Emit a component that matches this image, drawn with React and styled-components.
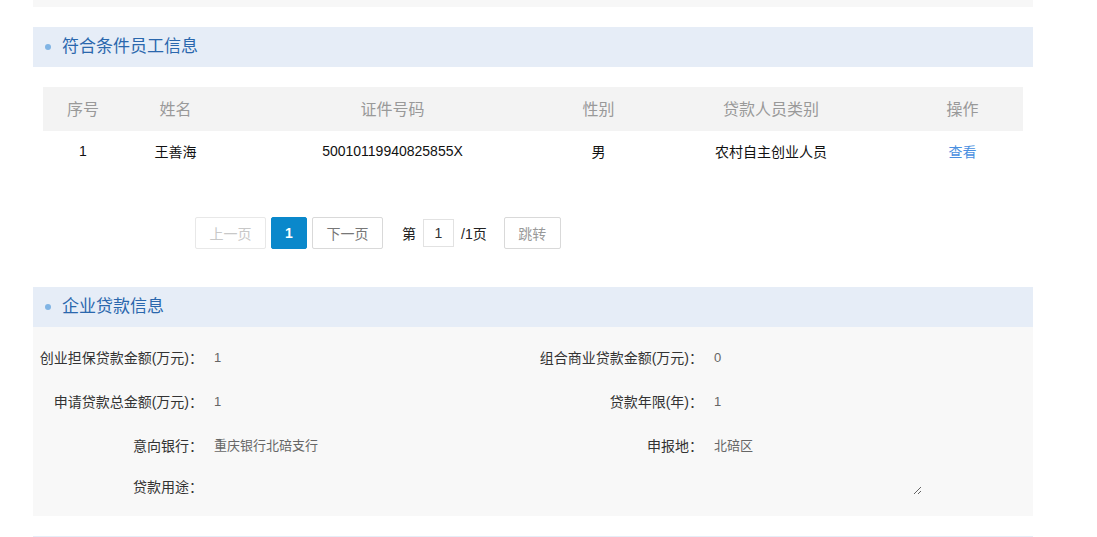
import React from "react";
import styled, { createGlobalStyle } from "styled-components";

const GlobalStyle = createGlobalStyle`
  html, body {
    margin: 0;
    padding: 0;
    background: #ffffff;
    font-family: "Liberation Sans", "Noto Sans CJK SC", sans-serif;
    color: #333;
  }
`;

const Page = styled.div`
  width: 1000px;
  margin-left: 33px;
  display: flex;
  flex-direction: column;
  gap: 20px;
`;

const PrevPanelTail = styled.div`
  height: 7px;
  background: #f7f7f7;
`;

const Section = styled.section`
  display: flex;
  flex-direction: column;
`;

const SectionHeader = styled.div`
  height: 40px;
  background: #e6edf7;
  display: flex;
  align-items: center;
  padding-left: 12px;
  gap: 11px;
`;

const Bullet = styled.span`
  width: 6px;
  height: 6px;
  border-radius: 50%;
  background: #80b4e4;
`;

const SectionTitle = styled.h3`
  margin: 0;
  font-size: 17px;
  font-weight: normal;
  color: #2a67ad;
  line-height: 40px;
`;

const TableWrap = styled.div`
  padding: 20px 10px 0;
`;

const Table = styled.table`
  width: 980px;
  border-collapse: collapse;
  table-layout: fixed;
`;

const HeadCell = styled.th`
  height: 42px;
  background: #f3f3f3;
  color: #999;
  font-size: 16px;
  font-weight: normal;
  text-align: center;
  vertical-align: middle;
  padding: 0 0 2px;
`;

const Cell = styled.td`
  height: 39px;
  font-size: 14px;
  color: ${(p) => (p.$link ? "#4a8fe0" : "#111")};
  text-align: center;
  vertical-align: middle;
  padding: 0 0 3px;
  cursor: ${(p) => (p.$link ? "pointer" : "default")};
`;

const Pager = styled.div`
  display: flex;
  align-items: center;
  padding: 44px 0 38px 162px;
  font-size: 14px;
`;

const PageBtn = styled.button`
  box-sizing: border-box;
  height: 32px;
  width: ${(p) => p.$w || 71}px;
  margin-right: 5px;
  border: 1px solid ${(p) => (p.$active ? "#0a88cb" : p.$disabled ? "#e8e8e8" : "#d9d9d9")};
  border-radius: 2px;
  background: ${(p) => (p.$active ? "#0a88cb" : "#fff")};
  color: ${(p) => (p.$active ? "#fff" : p.$disabled ? "#c8c8c8" : "#777")};
  font-family: inherit;
  font-size: 14px;
  font-weight: ${(p) => (p.$active ? "bold" : "normal")};
  padding: 0;
`;

const PagerText = styled.span`
  color: #222;
  margin-left: ${(p) => p.$ml || 0}px;
`;

const PageInput = styled.input`
  box-sizing: border-box;
  width: 31px;
  height: 28px;
  margin: 0 7px;
  border: 1px solid #e2e2e2;
  text-align: center;
  font-family: inherit;
  font-size: 14px;
  color: #333;
  padding: 0;
  outline: none;
`;

const JumpBtn = styled(PageBtn)`
  width: 57px;
  margin-left: 17px;
  color: #999;
`;

const InfoPanel = styled.div`
  background: #f8f8f8;
  padding: 9px 0 19px;
  display: grid;
  grid-template-columns: 500px 500px;
`;

const Field = styled.div`
  display: flex;
  align-items: ${(p) => (p.$top ? "flex-start" : "center")};
  height: ${(p) => (p.$top ? "auto" : "44px")};
  padding-top: ${(p) => (p.$top ? "9px" : "0")};
  grid-column: ${(p) => (p.$wide ? "1 / span 2" : "auto")};
`;

const Label = styled.span`
  width: 170px;
  flex-shrink: 0;
  text-align: right;
  font-size: 14px;
  color: #333;
  line-height: 20px;
  white-space: nowrap;
`;

const Value = styled.span`
  padding-left: 11px;
  font-size: 13px;
  color: #666;
  line-height: 20px;
`;

const Purpose = styled.textarea`
  margin-left: 11px;
  width: 708px;
  height: 18px;
  border: none;
  background: transparent;
  resize: both;
  font-family: inherit;
  font-size: 13px;
  color: #666;
  padding: 0;
  outline: none;
  overflow: hidden;
`;

const cols = [80, 105, 329, 83, 262, 121];
const heads = ["序号", "姓名", "证件号码", "性别", "贷款人员类别", "操作"];

export default function App() {
  return (
    <>
      <GlobalStyle />
      <Page>
        <PrevPanelTail />
        <Section>
          <SectionHeader>
            <Bullet />
            <SectionTitle>符合条件员工信息</SectionTitle>
          </SectionHeader>
          <TableWrap>
            <Table>
              <colgroup>
                {cols.map((w, i) => (
                  <col key={i} style={{ width: w }} />
                ))}
              </colgroup>
              <thead>
                <tr>
                  {heads.map((h) => (
                    <HeadCell key={h}>{h}</HeadCell>
                  ))}
                </tr>
              </thead>
              <tbody>
                <tr>
                  <Cell>1</Cell>
                  <Cell>王善海</Cell>
                  <Cell>50010119940825855X</Cell>
                  <Cell>男</Cell>
                  <Cell>农村自主创业人员</Cell>
                  <Cell $link>查看</Cell>
                </tr>
              </tbody>
            </Table>
          </TableWrap>
          <Pager>
            <PageBtn $disabled>上一页</PageBtn>
            <PageBtn $active $w={36}>1</PageBtn>
            <PageBtn>下一页</PageBtn>
            <PagerText $ml={14}>第</PagerText>
            <PageInput defaultValue="1" />
            <PagerText>/1页</PagerText>
            <JumpBtn>跳转</JumpBtn>
          </Pager>
          <SectionHeader>
            <Bullet />
            <SectionTitle>企业贷款信息</SectionTitle>
          </SectionHeader>
          <InfoPanel>
            <Field>
              <Label>创业担保贷款金额(万元)：</Label>
              <Value>1</Value>
            </Field>
            <Field>
              <Label>组合商业贷款金额(万元)：</Label>
              <Value>0</Value>
            </Field>
            <Field>
              <Label>申请贷款总金额(万元)：</Label>
              <Value>1</Value>
            </Field>
            <Field>
              <Label>贷款年限(年)：</Label>
              <Value>1</Value>
            </Field>
            <Field>
              <Label>意向银行：</Label>
              <Value>重庆银行北碚支行</Value>
            </Field>
            <Field>
              <Label>申报地：</Label>
              <Value>北碚区</Value>
            </Field>
            <Field $wide $top>
              <Label>贷款用途：</Label>
              <Purpose readOnly />
            </Field>
          </InfoPanel>
        </Section>
        <Section>
          <SectionHeader>
            <Bullet />
            <SectionTitle></SectionTitle>
          </SectionHeader>
        </Section>
      </Page>
    </>
  );
}
